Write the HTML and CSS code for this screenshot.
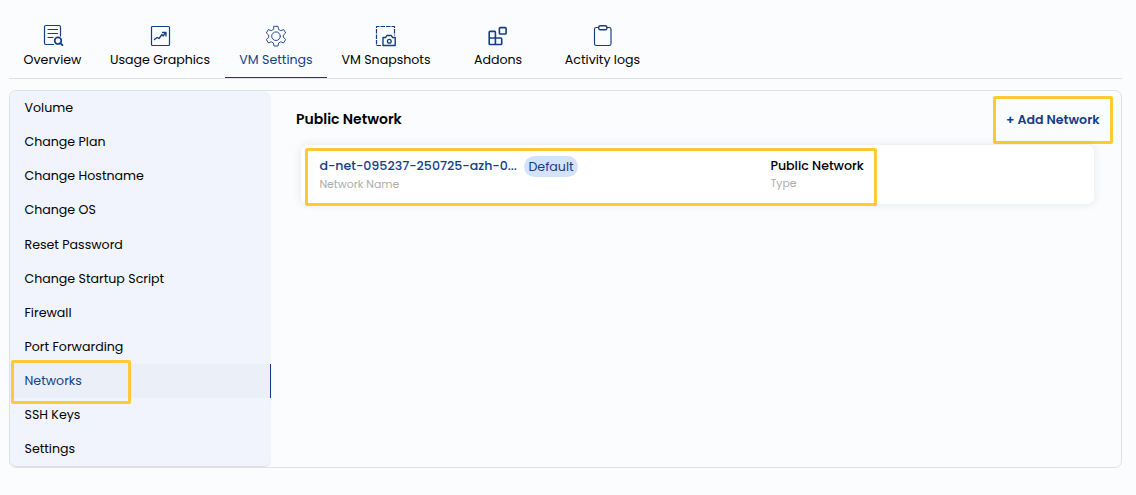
FILE: index.html
```html
<!DOCTYPE html>
<html lang="en">
<head>
<meta charset="utf-8">
<title>VM Settings</title>
<link rel="stylesheet" href="styles.css">
</head>
<body>
<nav class="tabs">
  <a class="tab tab-overview">
    <svg class="icon" viewBox="0 0 24 24"><path d="M12.500 20.500H5A1.500 1.500 0 0 1 3.500 19V3A1.500 1.500 0 0 1 5 1.500h13A1.500 1.500 0 0 1 19.500 3v9M7 5.500h9.500M7 9.500h9.500M7 13.500h5" stroke-width="1.200"/><circle cx="17" cy="16.700" r="3.300" stroke-width="1.700"/><path d="m19.400 19.200 2 2" stroke-width="1.900"/></svg>
    <span>Overview</span>
  </a>
  <a class="tab tab-usage">
    <svg class="icon" viewBox="0 0 24 24"><rect x="3.500" y="2.500" width="18" height="19" rx="1" stroke-width="1.200"/><path d="m6.500 15.500 2.500-2 2 1 3-4 1 1.500L17.500 9M14.500 8.500h3.500v3.500" stroke-width="1.300"/></svg>
    <span>Usage Graphics</span>
  </a>
  <a class="tab tab-settings active">
    <svg class="icon thin" viewBox="0 0 24 24"><path d="M10 2.300h4l.6 3.100 2.100 1.200 3-1 2 3.400-2.400 2.100v2.200l2.400 2.100-2 3.400-3-1-2.100 1.200-.6 3h-4l-.6-3-2.100-1.200-3 1-2-3.400 2.400-2.100v-2.200L2.300 9l2-3.400 3 1 2.100-1.200z"/><circle cx="12" cy="12.200" r="4.300"/></svg>
    <span>VM Settings</span>
  </a>
  <a class="tab tab-snapshots">
    <svg class="icon" viewBox="0 0 24 24"><path d="M7 21.500H2.500v-19h18v9" stroke-dasharray="4.500 1" stroke-width="1.200" stroke-linecap="butt"/><path d="M9 13.500h2.700l1.200-2h4.400l1.200 2h2.700v8H9z" stroke-width="1.400"/><circle cx="15.300" cy="17.300" r="1.900" stroke-width="1.300"/></svg>
    <span>VM Snapshots</span>
  </a>
  <a class="tab tab-addons">
    <svg class="icon" viewBox="0 0 24 24"><path d="M3.200 8.200q0-.8.800-.8h4.600q.8 0 .8.800v5.800h5.500q.8 0 .8.800v4.900q0 .8-.8.800H4q-.8 0-.8-.8zM3.200 14h6.200v6.500" stroke-width="1.600"/><rect x="13.400" y="3.600" width="6.700" height="6.400" rx=".8" stroke-width="1.600"/></svg>
    <span>Addons</span>
  </a>
  <a class="tab tab-logs">
    <svg class="icon" viewBox="0 0 24 24"><path d="M7.500 3.500H5.300Q3.500 3.500 3.500 5.300v14.400q0 1.800 1.800 1.800h12.900q1.800 0 1.800-1.800V5.300q0-1.800-1.800-1.800H16"/><rect x="7.700" y="1.800" width="8.200" height="4" rx="1.600" stroke-width="1.400"/></svg>
    <span>Activity logs</span>
  </a>
</nav>
<main class="panel">
  <aside class="sidebar">
    <a class="item">Volume</a>
    <a class="item">Change Plan</a>
    <a class="item">Change Hostname</a>
    <a class="item">Change OS</a>
    <a class="item">Reset Password</a>
    <a class="item">Change Startup Script</a>
    <a class="item">Firewall</a>
    <a class="item">Port Forwarding</a>
    <a class="item current">Networks<i class="highlight highlight-nav"></i></a>
    <a class="item">SSH Keys</a>
    <a class="item">Settings</a>
  </aside>
  <section class="content">
    <header class="head">
      <h1>Public Network</h1>
      <a class="add">+ Add Network<i class="highlight highlight-add"></i></a>
    </header>
    <div class="card">
      <div class="col-name">
        <div class="line"><span class="netname">d-net-095237-250725-azh-0...</span><span class="badge">Default</span></div>
        <small>Network Name</small>
      </div>
      <div class="col-type">
        <div class="line">Public Network</div>
        <small>Type</small>
      </div>
      <i class="highlight highlight-card"></i>
    </div>
  </section>
</main>
</body>
</html>
```
FILE: styles.css
```css
* { box-sizing: border-box; }
body {
  margin: 0;
  padding: 0 14px 0 9px;
  background: #fbfcfe;
  color: #000;
  font: 12.6px/20px Poppins, Inter, "Open Sans", sans-serif;
}
.tabs {
  display: flex;
  height: 79px;
  padding-left: 1px;
  border-bottom: 1px solid #dfe0e3;
}
.tab {
  display: flex;
  flex-direction: column;
  align-items: center;
  gap: 2px;
  padding-top: 24px;
  height: 78px;
  white-space: nowrap;
}
.tab.active { color: #133e87; border-bottom: 1px solid #133e87; }
.tab-overview { width: 85px; }
.tab-usage { width: 130px; }
.tab-settings { width: 102px; }
.tab-snapshots { width: 118px; }
.tab-addons { width: 106px; }
.tab-logs { width: 103px; }
.icon {
  width: 24px;
  height: 24px;
  fill: none;
  stroke: #133e87;
  stroke-width: 1.15;
  stroke-linejoin: round;
  stroke-linecap: round;
}
.icon.thin { stroke-width: .9; }
.panel {
  display: flex;
  height: 378px;
  margin-top: 11px;
  border: 1px solid #dfe0e3;
  border-radius: 7px;
}
.sidebar {
  width: 261px;
  border-radius: 7px;
  background: #f1f4fc;
  border-bottom: 1px solid #dfe0e3;
}
.item {
  position: relative;
  display: flex;
  align-items: center;
  height: 34.12px;
  padding: .15px 0 0 14.5px;
}
.item.current {
  color: #133e87;
  background: #ebeff8;
  border-right: 1px solid #133e87;
}
.highlight {
  position: absolute;
  border: 3px solid #ffca35;
  border-radius: 2px;
}
.highlight-nav { left: 1px; top: -4px; width: 120px; height: 44px; }
.highlight-add { left: -13px; top: -14px; width: 120px; height: 48px; }
.highlight-card { left: 4px; top: 3px; width: 572px; height: 58px; }
.content { flex: 1; padding: 18px 26px 0 25px; }
.head {
  display: flex;
  justify-content: space-between;
  height: 36px;
}
h1 { margin: 0; font-size: 14px; font-weight: 600; line-height: 20px; }
.add {
  position: relative;
  width: 89px;
  height: 20px;
  margin-top: 1px;
  color: #133e87;
  font-weight: 600;
  white-space: nowrap;
}
.card {
  position: relative;
  display: flex;
  width: 793px;
  height: 59px;
  margin-left: 5px;
  padding: 11px 0 0 18.4px;
  background: #fff;
  border-radius: 7px;
  box-shadow: 0 0 10px rgba(30, 40, 60, .1);
}
.col-name { width: 451px; }
.line { display: flex; height: 20px; font-weight: 500; white-space: nowrap; }
.netname { color: #133e87; }
.badge {
  height: 21px;
  margin-left: 7.2px;
  padding: 1px 4.4px 0;
  border-radius: 11px;
  background: #d3e3fe;
  color: #133e87;
  font-weight: 400;
}
small { display: block; margin-top: 1px; color: #adadad; font-size: 10.9px; line-height: 16px; }
.col-type small { margin-top: 0; }
```
